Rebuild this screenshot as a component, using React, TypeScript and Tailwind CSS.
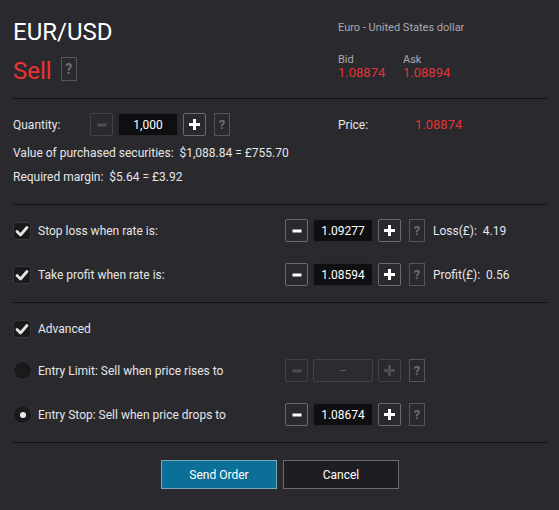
import React from "react";

function MinusIcon({ color }: { color: string }) {
  return (
    <svg width="12" height="12" viewBox="0 0 12 12">
      <rect x="1.5" y="4.5" width="9" height="3" fill={color} />
    </svg>
  );
}

function PlusIcon({ color }: { color: string }) {
  return (
    <svg width="13" height="13" viewBox="0 0 13 13">
      <rect x="1" y="5" width="11" height="3" fill={color} />
      <rect x="5" y="1" width="3" height="11" fill={color} />
    </svg>
  );
}

function StepBtn({ disabled, kind }: { disabled?: boolean; kind: "minus" | "plus" }) {
  const color = disabled ? "#4e4e52" : "#ffffff";
  return (
    <div
      className={
        "w-[23px] h-[23px] flex items-center justify-center rounded-[2px] border " +
        (disabled ? "border-[#434347]" : "border-[#6c6c70]")
      }
    >
      {kind === "minus" ? <MinusIcon color={color} /> : <PlusIcon color={color} />}
    </div>
  );
}

function Help({ tall }: { tall?: boolean }) {
  return (
    <div
      className={
        "w-[16px] flex items-center justify-center border border-[#55555a] text-[#6e6e72] font-bold " +
        (tall ? "h-[24px] text-[14px]" : "h-[23px] text-[13px]")
      }
    >
      ?
    </div>
  );
}

function Stepper({
  value,
  minusDisabled,
  allDisabled,
}: {
  value: string;
  minusDisabled?: boolean;
  allDisabled?: boolean;
}) {
  return (
    <div className="flex items-center">
      <StepBtn kind="minus" disabled={minusDisabled || allDisabled} />
      {allDisabled ? (
        <div className="ml-[5px] w-[60px] h-[23px] rounded-[2px] border border-[#424246] bg-[#2c2c30] flex items-center justify-center text-[#5c5c60] text-[12px]">
          –
        </div>
      ) : (
        <div className="ml-[5px] w-[60px] h-[23px] rounded-[2px] border border-[#26262a] bg-[#0f0f11] flex items-center justify-center text-white text-[12px] leading-[14px]">
          {value}
        </div>
      )}
      <div className="ml-[5px]">
        <StepBtn kind="plus" disabled={allDisabled} />
      </div>
      <div className="ml-[8px]">
        <Help />
      </div>
    </div>
  );
}

function Check() {
  return (
    <div className="w-[18px] h-[18px] rounded-[3px] bg-[#1a1a1c] border border-[#38383c] flex items-center justify-center">
      <svg width="16" height="16" viewBox="0 0 16 16">
        <polyline
          points="3,8.5 6.5,12 13,4.5"
          fill="none"
          stroke="#e4e4e4"
          strokeWidth="2.8"
          strokeLinecap="round"
          strokeLinejoin="round"
        />
      </svg>
    </div>
  );
}

function Radio({ selected }: { selected?: boolean }) {
  return (
    <div className="w-[19px] h-[19px] rounded-full bg-[#1a1a1c] border border-[#333337] flex items-center justify-center">
      {selected && <div className="w-[6px] h-[6px] rounded-full bg-[#e8e8e8]" />}
    </div>
  );
}

function Divider() {
  return <div className="h-px bg-[#101012]" />;
}

export default function App() {
  return (
    <div className="w-[559px] h-[510px] bg-[#29292e] pl-[13px] pr-[12px] text-[#e6e6e6] text-[12px] [font-family:Roboto,sans-serif] overflow-hidden">
      {/* Header */}
      <div className="h-[98px] flex">
        <div className="w-[325px] pt-[18px]">
          <div className="text-[24px] leading-[28px] text-white">EUR/USD</div>
          <div className="mt-[11px] flex items-start">
            <div className="text-[24px] leading-[28px] text-[#ee3232]">Sell</div>
            <div className="ml-[9px]">
              <Help tall />
            </div>
          </div>
        </div>
        <div className="pt-[21px]">
          <div className="text-[11px] leading-[13px] text-[#a9a9b1]">Euro - United States dollar</div>
          <div className="mt-[20px] flex">
            <div className="w-[65px]">
              <div className="text-[11px] leading-[12px] text-[#a9a9b1]">Bid</div>
              <div className="text-[13px] leading-[13px] text-[#e03535]">1.08874</div>
            </div>
            <div>
              <div className="text-[11px] leading-[12px] text-[#a9a9b1]">Ask</div>
              <div className="text-[13px] leading-[13px] text-[#e03535]">1.08894</div>
            </div>
          </div>
        </div>
      </div>
      <Divider />

      {/* Quantity section */}
      <div className="mt-[14px] h-[23px] flex items-center">
        <div className="w-[77px] leading-[14px]">Quantity:</div>
        <div className="w-[248px]">
          <Stepper value="1,000" minusDisabled />
        </div>
        <div className="w-[77px] leading-[14px]">Price:</div>
        <div className="text-[13px] leading-[15px] text-[#e03535]">1.08874</div>
      </div>
      <div className="mt-[5px] leading-[24px] whitespace-pre">Value of purchased securities:  $1,088.84 = £755.70</div>
      <div className="leading-[24px] whitespace-pre">Required margin:  $5.64 = £3.92</div>
      <div className="h-[15px]" />
      <Divider />

      {/* Stop loss / Take profit */}
      <div className="mt-[14px] h-[23px] flex items-center">
        <div className="w-[272px] flex items-center">
          <Check />
          <div className="ml-[7px] leading-[14px]">Stop loss when rate is:</div>
        </div>
        <Stepper value="1.09277" />
        <div className="ml-[8px] leading-[14px] whitespace-pre">Loss(£):  4.19</div>
      </div>
      <div className="mt-[21px] h-[23px] flex items-center">
        <div className="w-[272px] flex items-center">
          <Check />
          <div className="ml-[7px] leading-[14px]">Take profit when rate is:</div>
        </div>
        <Stepper value="1.08594" />
        <div className="ml-[8px] leading-[14px] whitespace-pre">Profit(£):  0.56</div>
      </div>
      <div className="h-[16px]" />
      <Divider />

      {/* Advanced */}
      <div className="mt-[14px] h-[23px] flex items-center">
        <Check />
        <div className="ml-[7px] leading-[14px]">Advanced</div>
      </div>
      <div className="mt-[19px] h-[23px] flex items-center">
        <div className="w-[272px] flex items-center">
          <Radio />
          <div className="ml-[6px] leading-[14px]">Entry Limit: Sell when price rises to</div>
        </div>
        <Stepper value="" allDisabled />
      </div>
      <div className="mt-[21px] h-[23px] flex items-center">
        <div className="w-[272px] flex items-center">
          <Radio selected />
          <div className="ml-[6px] leading-[14px]">Entry Stop: Sell when price drops to</div>
        </div>
        <Stepper value="1.08674" />
      </div>
      <div className="h-[16px]" />
      <Divider />

      {/* Buttons */}
      <div className="mt-[17px] flex justify-center gap-[6px]">
        <button className="w-[116px] h-[29px] bg-[#0b6f97] border border-[#7aa6bb] text-white text-[12px] leading-[14px]">
          Send Order
        </button>
        <button className="w-[116px] h-[29px] bg-[#1e1e22] border border-[#6c6c70] text-white text-[12px] leading-[14px]">
          Cancel
        </button>
      </div>
    </div>
  );
}
